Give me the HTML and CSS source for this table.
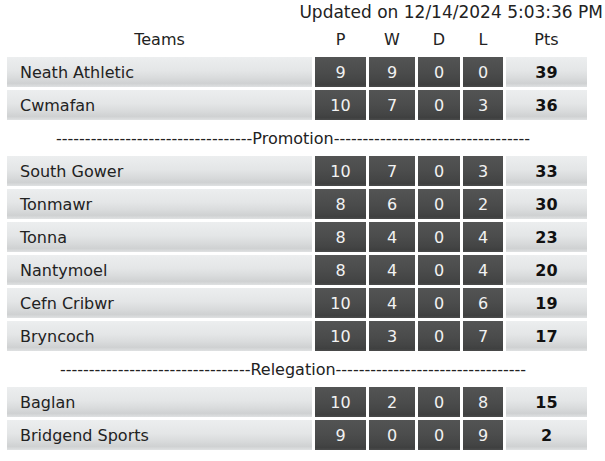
FILE: index.html
```html
<!DOCTYPE html>
<html>
<head>
<meta charset="utf-8">
<link rel="stylesheet" href="styles.css">
</head>
<body>
<div class="updated">Updated on 12/14/2024 5:03:36 PM</div>
<table class="league">
  <thead>
    <tr><th class="team-h">Teams</th><th>P</th><th>W</th><th>D</th><th>L</th><th>Pts</th></tr>
  </thead>
  <tbody>
    <tr><td class="team">Neath Athletic</td><td class="num">9</td><td class="num">9</td><td class="num">0</td><td class="num">0</td><td class="pts">39</td></tr>
    <tr><td class="team">Cwmafan</td><td class="num">10</td><td class="num">7</td><td class="num">0</td><td class="num">3</td><td class="pts">36</td></tr>
    <tr><td class="sep" colspan="6">----------------------------------Promotion----------------------------------</td></tr>
    <tr><td class="team">South Gower</td><td class="num">10</td><td class="num">7</td><td class="num">0</td><td class="num">3</td><td class="pts">33</td></tr>
    <tr><td class="team">Tonmawr</td><td class="num">8</td><td class="num">6</td><td class="num">0</td><td class="num">2</td><td class="pts">30</td></tr>
    <tr><td class="team">Tonna</td><td class="num">8</td><td class="num">4</td><td class="num">0</td><td class="num">4</td><td class="pts">23</td></tr>
    <tr><td class="team">Nantymoel</td><td class="num">8</td><td class="num">4</td><td class="num">0</td><td class="num">4</td><td class="pts">20</td></tr>
    <tr><td class="team">Cefn Cribwr</td><td class="num">10</td><td class="num">4</td><td class="num">0</td><td class="num">6</td><td class="pts">19</td></tr>
    <tr><td class="team">Bryncoch</td><td class="num">10</td><td class="num">3</td><td class="num">0</td><td class="num">7</td><td class="pts">17</td></tr>
    <tr><td class="sep" colspan="6">---------------------------------Relegation---------------------------------</td></tr>
    <tr><td class="team">Baglan</td><td class="num">10</td><td class="num">2</td><td class="num">0</td><td class="num">8</td><td class="pts">15</td></tr>
    <tr><td class="team">Bridgend Sports</td><td class="num">9</td><td class="num">0</td><td class="num">0</td><td class="num">9</td><td class="pts">2</td></tr>
  </tbody>
</table>
</body>
</html>
```

FILE: styles.css
```css
html, body {
  margin: 0;
  padding: 0;
  background: #ffffff;
}
body {
  font-family: "DejaVu Sans", Verdana, sans-serif;
  font-size: 16px;
  color: #222222;
}
.updated {
  text-align: right;
  padding-right: 2px;
  height: 21px;
  font-size: 17px;
  line-height: 25px;
  white-space: nowrap;
}
.league {
  border-collapse: separate;
  border-spacing: 3px;
  margin-left: 4px;
}
.league th {
  font-weight: normal;
  height: 29px;
  padding: 1px 0 0 0;
  text-align: center;
  color: #222222;
}
.league td {
  height: 30px;
  padding: 0;
}
.team-h { width: 305px; }
.league th:nth-child(2) { width: 51px; }
.league th:nth-child(3) { width: 46px; }
.league th:nth-child(4) { width: 42px; }
.league th:nth-child(5) { width: 40px; }
.league th:nth-child(6) { width: 81px; }
.team {
  padding-left: 13px !important;
  color: #222222;
  background: linear-gradient(to bottom, #eceeef 0%, #e4e6e7 45%, #d9dbdc 70%, #cfd1d2 88%, #dfe1e2 100%);
}
.num {
  text-align: center;
  color: #f2f2f2;
  background: linear-gradient(to bottom, #535454 0%, #4b4c4c 50%, #444545 80%, #3f4040 92%, #4a4b4b 100%);
}
.pts {
  text-align: center;
  font-weight: bold;
  color: #111111;
  background: linear-gradient(to bottom, #eceeef 0%, #e4e6e7 45%, #d9dbdc 70%, #cfd1d2 88%, #dfe1e2 100%);
}
.league td.sep {
  text-align: center;
  background: none;
  color: #222222;
  white-space: nowrap;
  padding-right: 8px;
}
```
